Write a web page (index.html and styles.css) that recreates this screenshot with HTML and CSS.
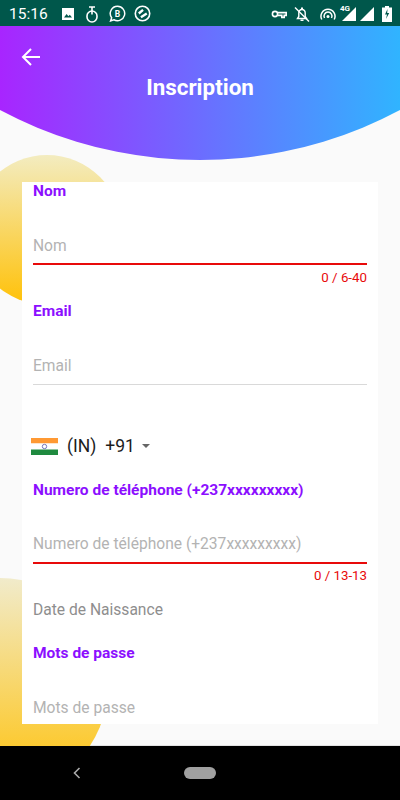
FILE: index.html
```html
<!DOCTYPE html>
<html>

<head>
    <title>Inscription</title>
    <meta name="viewport" content="width=device-width, initial-scale=1.0">
    <meta charset="UTF-8">
    <link rel="stylesheet" href="styles.css">
</head>

<body>
    <div class="screen">
        <div class="blobs">
            <div class="blob blob-top"></div>
            <div class="blob blob-bottom"></div>
        </div>

        <div class="status-bar">
            <span class="clock">15:16</span>
            <div class="st-left">
                <svg viewBox="0 0 16 16" width="16" height="16"><path fill="#fff" d="M2 2h12v12H2z"/><path fill="#00574b" d="M4 11.500l2.600-3.400 1.800 2.200 1.400-1.600 2.200 2.800z"/></svg>
                <svg viewBox="0 0 16 18" width="16" height="18"><g fill="none" stroke="#fff" stroke-width="1.600"><rect x="3" y="6" width="10" height="11" rx="5"/><path d="M8 1.500v8M5 2h6"/></g></svg>
                <svg viewBox="0 0 16 16" width="17" height="17"><path fill="none" stroke="#fff" stroke-width="1.400" d="M8 1.200a6.800 6.800 0 1 1-3.400 12.700L1.500 15l1-3A6.800 6.800 0 0 1 8 1.200z"/><text x="8" y="11" text-anchor="middle" class="st-b">B</text></svg>
                <svg viewBox="0 0 16 16" width="17" height="17"><circle cx="8" cy="8" r="6.800" fill="none" stroke="#fff" stroke-width="1.500"/><path fill="none" stroke="#fff" stroke-width="2.200" d="M4.500 8l4-3.500M6.500 11.500L12 8"/></svg>
            </div>
            <span class="st-gap"></span>
            <svg viewBox="0 0 16 16" width="16" height="16"><g fill="none" stroke="#fff" stroke-width="1.600"><circle cx="4" cy="8" r="2.600"/><path d="M6.800 6.600h8.400v2.800h-2v2h-2.400v-2H6.800"/></g></svg>
            <svg class="st-bell" viewBox="0 0 16 16" width="16" height="16"><g fill="none" stroke="#fff" stroke-width="1.400"><path d="M3.500 12.500h9l-1.300-2V7A3.200 3.200 0 0 0 8 3.500 3.200 3.200 0 0 0 4.800 7v3.500z"/><path d="M1 1.500l14 14"/></g><path fill="#fff" d="M6.500 13.500h3V15h-3zM7 1.500h2v2H7z"/></svg>
            <svg class="st-wifi" viewBox="0 0 16 16" width="16" height="16"><g fill="none" stroke="#fff" stroke-width="1.500"><path d="M1.800 13.500a7 7 0 1 1 12.400 0"/><path d="M4.500 12a4 4 0 1 1 7 0"/></g><circle cx="8" cy="10.500" r="1.500" fill="#fff"/></svg>
            <span class="signal-wrap">
                <span class="net">4G</span>
                <svg viewBox="0 0 14 14" width="14" height="14"><path fill="#fff" d="M14 0v14H0z"/></svg>
            </span>
            <svg class="st-signal" viewBox="0 0 14 14" width="14" height="14"><path fill="#fff" d="M14 0v14H0z"/></svg>
            <svg class="st-batt" viewBox="0 0 10 16" width="10" height="16"><path fill="#fff" d="M3 0h4v1.500h3V16H0V1.500h3z"/><path fill="#00574b" d="M5.500 3L3 8.500h2L4 13l3.200-6H5.200z"/></svg>
        </div>

        <header class="banner">
            <svg class="back" viewBox="0 0 20 20" width="20" height="20"><path fill="none" stroke="#fff" stroke-width="2" d="M19 10H2.500M10 2l-8 8 8 8"/></svg>
            <h1>Inscription</h1>
        </header>

        <form class="card">
            <label class="field-label">Nom</label>
            <div class="input invalid"><span>Nom</span></div>
            <div class="counter">0 / 6-40</div>

            <label class="field-label email-label">Email</label>
            <div class="input"><span>Email</span></div>

            <div class="phone-code">
                <svg class="flag" viewBox="0 0 27 17" width="27" height="17">
                    <path fill="#f93" d="M0 0h27v5.500H0z"/>
                    <path fill="#fff" d="M0 5.500h27v6H0z"/>
                    <path fill="#1f8a3f" d="M0 11.500h27V17H0z"/>
                    <circle cx="13.500" cy="8.500" r="2.200" fill="none" stroke="#55a" stroke-width=".8"/>
                </svg>
                <span class="iso">(IN)</span>
                <span>+91</span>
                <span class="caret"></span>
            </div>

            <label class="field-label phone-label">Numero de téléphone (+237xxxxxxxxx)</label>
            <div class="input invalid phone-input"><span>Numero de téléphone (+237xxxxxxxxx)</span></div>
            <div class="counter">0 / 13-13</div>

            <div class="date">Date de Naissance</div>

            <label class="field-label pass-label">Mots de passe</label>
            <div class="input no-line"><span>Mots de passe</span></div>
        </form>

        <nav class="nav-bar">
            <svg class="nav-back" viewBox="0 0 10 12" width="10" height="12"><path fill="none" stroke="#aaa" stroke-width="1.600" d="M7.500 1L2.500 6l5 5"/></svg>
            <span class="nav-pill"></span>
        </nav>
    </div>
</body>

</html>
```

FILE: styles.css
```css
:root {
    --purple: #8c0fff;
    --red: #e80a0a;
    --status: #00574b;
}

* {
    box-sizing: border-box;
}

body {
    margin: 0;
    font-family: Roboto, "Liberation Sans", sans-serif;
}

.screen {
    position: relative;
    width: 400px;
    height: 800px;
    overflow: hidden;
    background: #fafafa;
    display: flex;
    flex-direction: column;
}

/* decorative circles behind the card, cut off by the nav bar */
.blobs {
    position: absolute;
    top: 0;
    left: 0;
    right: 0;
    bottom: 54px;
    overflow: hidden;
}

.blob {
    position: absolute;
    border-radius: 50%;
}

.blob-top {
    left: -28px;
    top: 155px;
    width: 150px;
    height: 150px;
    background: linear-gradient(#f3ecc0, #ffc107);
}

.blob-bottom {
    left: -108px;
    top: 578px;
    width: 216px;
    height: 216px;
    background: linear-gradient(#f1ebcb, #ffc107);
}

.status-bar {
    height: 26px;
    flex-shrink: 0;
    background: var(--status);
    color: #fff;
    display: flex;
    align-items: center;
    padding: 1px 8px 0 9px;
    position: relative;
}

.clock {
    font-size: 15.500px;
    margin-right: 12px;
}

.st-left {
    display: flex;
    align-items: center;
    gap: 8.500px;
}

.st-gap {
    flex: 1;
}

.st-b {
    font: bold 8px Roboto, sans-serif;
    fill: #fff;
}

.st-bell {
    margin-left: 7px;
}

.st-wifi {
    margin-left: 10px;
}

.st-signal {
    margin-left: 4px;
}

.st-batt {
    margin-left: 8px;
}

.signal-wrap {
    position: relative;
    display: flex;
    margin-left: 6px;
}

.net {
    position: absolute;
    left: -2px;
    top: -3px;
    font-size: 8px;
    font-weight: 700;
}

.banner {
    position: relative;
    height: 134px;
    flex-shrink: 0;
    background: linear-gradient(90deg, #a825ff, #30b4ff);
    clip-path: circle(425px at 200px -291px);
    padding-top: 47px;
}

.back {
    position: absolute;
    left: 21px;
    top: 21px;
}

.banner h1 {
    margin: 0;
    text-align: center;
    color: #fff;
    font-size: 22.400px;
    font-weight: 700;
    line-height: 28px;
}

.card {
    position: relative;
    margin: 22px 22px 0;
    height: 542px;
    background: #fff;
    padding: 0 11px;
    overflow: hidden;
}

.field-label {
    display: block;
    color: var(--purple);
    font-size: 15.500px;
    font-weight: 700;
    line-height: 16px;
    padding-top: 1px;
}

.email-label {
    margin-top: 17px;
}

.phone-label {
    margin-top: 13px;
}

.pass-label {
    margin-top: 24px;
}

.input {
    height: 66px;
    padding-top: 37px;
    color: #b3b3b3;
    font-size: 15.600px;
    line-height: 20px;
    border-bottom: 1px solid #d9d9d9;
}

.input.invalid {
    border-bottom: 2px solid var(--red);
}

.input.phone-input {
    padding-top: 36px;
}

.input.no-line {
    border: none;
}

.counter {
    color: var(--red);
    font-size: 13.300px;
    line-height: 14px;
    margin-top: 5px;
    text-align: right;
}

.input + .counter {
    margin-top: 6px;
}

.phone-input + .counter {
    margin-top: 5px;
}

.phone-code {
    display: flex;
    align-items: center;
    margin: 39px 0 0 -2px;
    height: 44px;
    font-size: 17.500px;
    color: #1c1c1c;
}

.flag {
    margin-right: 9px;
}

.iso {
    margin-right: 9px;
}

.caret {
    width: 0;
    height: 0;
    margin-left: 7px;
    border: 4px solid transparent;
    border-top-color: #666;
    border-bottom: none;
}

.date {
    color: #8e8e8e;
    font-size: 15.600px;
    line-height: 20px;
    margin-top: 17px;
}

.nav-bar {
    margin-top: auto;
    height: 54px;
    flex-shrink: 0;
    background: #000;
    box-shadow: 0 -1px #e2e2e2;
    display: flex;
    align-items: center;
}

.nav-back {
    margin-left: 72px;
    position: relative;
}

.nav-pill {
    width: 32px;
    height: 12px;
    border-radius: 6px;
    background: #a0a0a0;
    margin-left: 102px;
    position: relative;
}
```
